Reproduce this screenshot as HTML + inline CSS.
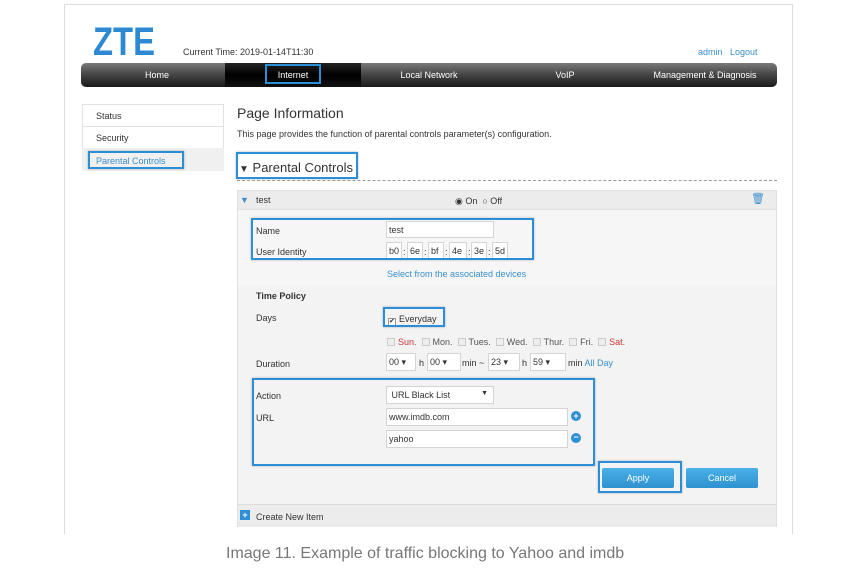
<!DOCTYPE html>
<html><head><meta charset="utf-8"><style>
*{margin:0;padding:0;box-sizing:border-box}
body{width:868px;height:584px;background:#fff;font-family:"Liberation Sans",sans-serif;position:relative;overflow:hidden;color:#333}
.a{position:absolute;white-space:nowrap}
.f{font-size:9px}
.box{position:absolute;border:2px solid #2a8fd6;box-shadow:0 0 2px rgba(0,0,0,.3)}
.in{position:absolute;background:#fff;border:1px solid #d4d4d4;font-size:9px;padding:3px 2px;color:#333}
.cb{display:inline-block;width:8px;height:8px;border:1px solid #ccc;background:#eee;margin-right:3px;vertical-align:-1px}
.nav{position:absolute;color:#fff;font-size:9px;text-align:center;top:70px}
</style></head><body>
<div class="a" style="left:64px;top:4px;width:729px;height:530px;border:1px solid #ddd;border-bottom:none"></div>
<div class="a" style="left:93px;top:20px;font-size:40px;font-weight:bold;color:#2d8ad2;transform:scaleX(0.82);transform-origin:left">ZTE</div>
<div class="a f" style="left:183px;top:47px;color:#333">Current Time: 2019-01-14T11:30</div>
<div class="a f" style="left:698px;top:47px;color:#3a8fcc">admin &nbsp;&nbsp;Logout</div>
<div class="a" style="left:81px;top:63px;width:696px;height:24px;border-radius:5px;background:linear-gradient(#7a7a7a,#444 50%,#1a1a1a);"></div>
<div class="a" style="left:225px;top:63px;width:136px;height:24px;background:linear-gradient(#222,#000 50%,#111)"></div>
<div class="nav" style="left:81px;width:152px">Home</div>
<div class="nav" style="left:225px;width:136px">Internet</div>
<div class="box" style="left:265px;top:64px;width:56px;height:20px"></div>
<div class="nav" style="left:361px;width:136px">Local Network</div>
<div class="nav" style="left:497px;width:136px">VoIP</div>
<div class="nav" style="left:633px;width:144px">Management &amp; Diagnosis</div>

<div class="a" style="left:82px;top:104px;width:142px;height:67px;border:1px solid #e2e2e2;background:#fff"></div>
<div class="a" style="left:82px;top:126px;width:142px;height:1px;background:#e2e2e2"></div>
<div class="a" style="left:82px;top:148px;width:142px;height:23px;background:#f0f0f0"></div>
<div class="a f" style="left:96px;top:111px">Status</div>
<div class="a f" style="left:96px;top:133px">Security</div>
<div class="a f" style="left:96px;top:156px;color:#3a8fcc">Parental Controls</div>
<div class="box" style="left:88px;top:151px;width:96px;height:18px"></div>

<div class="a" style="left:237px;top:105px;font-size:14px;color:#333">Page Information</div>
<div class="a f" style="left:237px;top:129px">This page provides the function of parental controls parameter(s) configuration.</div>
<div class="a" style="left:239px;top:160px;font-size:13px;color:#333"><span style="font-size:10px">▼</span> Parental Controls</div>
<div class="box" style="left:236px;top:152px;width:122px;height:27px"></div>
<div class="a" style="left:237px;top:180px;width:540px;border-top:1px dashed #999"></div>

<div class="a" style="left:237px;top:190px;width:540px;height:337px;background:#f3f3f3;border:1px solid #e0e0e0"></div>
<div class="a" style="left:237px;top:190px;width:540px;height:20px;background:#ececec;border:1px solid #e0e0e0"></div>
<div class="a" style="left:238px;top:210px;width:538px;height:75px;background:#f6f6f6"></div>
<div class="a f" style="left:240px;top:195px;color:#3a8fcc">▼</div>
<div class="a f" style="left:256px;top:195px">test</div>
<div class="a f" style="left:455px;top:196px">◉ On &nbsp;○ Off</div>
<div class="a" style="left:751px;top:192px;font-size:11px;color:#3a8fcc">🗑</div>

<div class="a f" style="left:256px;top:226px">Name</div>
<div class="a f" style="left:256px;top:247px">User Identity</div>
<div class="in" style="left:386px;top:221px;width:108px;height:17px">test</div>
<div class="in" style="left:386px;top:242px;width:16px;height:18px">b0</div>
<div class="a f" style="left:403px;top:247px">:</div>
<div class="in" style="left:407px;top:242px;width:16px;height:18px">6e</div>
<div class="a f" style="left:424px;top:247px">:</div>
<div class="in" style="left:428px;top:242px;width:16px;height:18px">bf</div>
<div class="a f" style="left:445px;top:247px">:</div>
<div class="in" style="left:449px;top:242px;width:18px;height:18px">4e</div>
<div class="a f" style="left:468px;top:247px">:</div>
<div class="in" style="left:471px;top:242px;width:16px;height:18px">3e</div>
<div class="a f" style="left:488px;top:247px">:</div>
<div class="in" style="left:492px;top:242px;width:16px;height:18px">5d</div>
<div class="box" style="left:251px;top:218px;width:283px;height:42px"></div>
<div class="a f" style="left:387px;top:269px;color:#3a8fcc">Select from the associated devices</div>

<div class="a f" style="left:256px;top:291px;font-weight:bold">Time Policy</div>
<div class="a f" style="left:256px;top:313px">Days</div>
<div class="a f" style="left:388px;top:314px"><span class="cb" style="background:#fff;border-color:#999;font-size:7px;line-height:6px">✔</span>Everyday</div>
<div class="box" style="left:383px;top:307px;width:62px;height:20px"></div>
<div class="a f" style="left:387px;top:337px;color:#555"><span class="cb"></span><span style="color:#c33">Sun.</span> &nbsp;<span class="cb"></span>Mon. &nbsp;<span class="cb"></span>Tues. &nbsp;<span class="cb"></span>Wed. &nbsp;<span class="cb"></span>Thur. &nbsp;<span class="cb"></span>Fri. &nbsp;<span class="cb"></span><span style="color:#c33">Sat.</span></div>
<div class="a f" style="left:256px;top:359px">Duration</div>
<div class="in" style="left:386px;top:353px;width:30px;height:18px">00 ▾</div>
<div class="a f" style="left:419px;top:358px">h</div>
<div class="in" style="left:427px;top:353px;width:34px;height:18px">00 ▾</div>
<div class="a f" style="left:462px;top:358px">min ~</div>
<div class="in" style="left:488px;top:353px;width:32px;height:18px">23 ▾</div>
<div class="a f" style="left:522px;top:358px">h</div>
<div class="in" style="left:530px;top:353px;width:36px;height:18px">59 ▾</div>
<div class="a f" style="left:568px;top:358px">min <span style="color:#3a8fcc">All Day</span></div>

<div class="a f" style="left:256px;top:391px">Action</div>
<div class="in" style="left:386px;top:386px;width:108px;height:18px">&nbsp;URL Black List<span style="float:right;font-size:7px;margin-right:3px">▼</span></div>
<div class="a f" style="left:256px;top:413px">URL</div>
<div class="in" style="left:386px;top:408px;width:182px;height:18px">www.imdb.com</div>
<div class="in" style="left:386px;top:430px;width:182px;height:18px">yahoo</div>
<div class="a" style="left:571px;top:411px;width:10px;height:10px;border-radius:50%;background:#2f8fd5;color:#fff;font-size:9px;line-height:10px;text-align:center;font-weight:bold">+</div>
<div class="a" style="left:571px;top:433px;width:10px;height:10px;border-radius:50%;background:#2f8fd5;color:#fff;font-size:9px;line-height:9px;text-align:center;font-weight:bold">−</div>
<div class="box" style="left:252px;top:378px;width:343px;height:88px"></div>

<div class="a" style="left:602px;top:468px;width:72px;height:20px;background:linear-gradient(#4ab0e8,#2d92d0);border-radius:2px;color:#fff;font-size:9px;text-align:center;line-height:20px">Apply</div>
<div class="box" style="left:598px;top:461px;width:84px;height:32px"></div>
<div class="a" style="left:686px;top:468px;width:72px;height:20px;background:linear-gradient(#4ab0e8,#2d92d0);border-radius:2px;color:#fff;font-size:9px;text-align:center;line-height:20px">Cancel</div>

<div class="a" style="left:238px;top:504px;width:538px;height:23px;background:#ececec;border-top:1px solid #ddd"></div>
<div class="a" style="left:240px;top:510px;width:10px;height:10px;background:#2f8fd5;color:#fff;font-size:9px;line-height:10px;text-align:center;font-weight:bold">+</div>
<div class="a f" style="left:256px;top:512px">Create New Item</div>

<div class="a" style="left:226px;top:545px;font-size:16px;color:#777">Image 11. Example of traffic blocking to Yahoo and imdb</div>
</body></html>
